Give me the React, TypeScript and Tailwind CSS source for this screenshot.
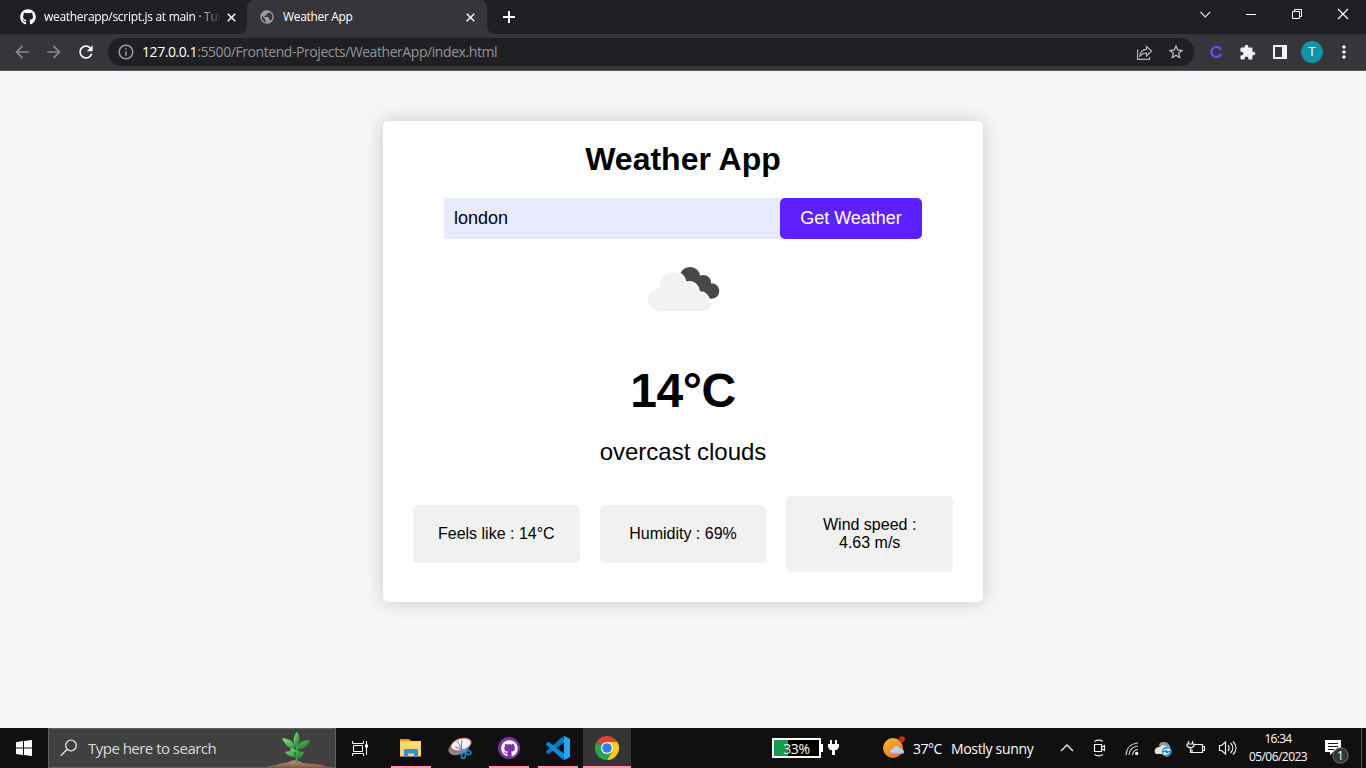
import React from "react";
import { FaGithub } from "react-icons/fa";
import {
  MdArrowBack,
  MdArrowForward,
  MdExtension,
  MdInfoOutline,
  MdMoreVert,
  MdPublic,
  MdRefresh,
  MdStarBorder,
} from "react-icons/md";

function CloseMark() {
  return (
    <svg className="h-[9px] w-[9px] shrink-0" viewBox="0 0 9 9" stroke="#f1f1f3" strokeWidth="1.6">
      <path d="M.7 .7 8.3 8.3M8.3 .7 .7 8.3" />
    </svg>
  );
}

function TabStrip() {
  return (
    <div className="flex h-[34px] items-stretch bg-[#202024] text-[12px] text-white">
      <div className="flex w-[239px] items-center pl-5">
        <FaGithub className="h-4 w-4 shrink-0" />
        <div className="ml-2 w-[176px] whitespace-nowrap tracking-[-0.3px] [mask-image:linear-gradient(to_right,black_152px,transparent_178px)]">
          weatherapp/script.js at main · Tus
        </div>
        <div className="ml-[7px] flex"><CloseMark /></div>
      </div>
      <svg className="h-[34px] w-2 shrink-0" viewBox="0 0 8 34"><path d="M8 26a8 8 0 0 1-8 8h8z" fill="#36353b" /></svg>
      <div className="flex w-[240px] items-center rounded-t-lg bg-[#36353b] pr-3 pl-[12px]">
        <MdPublic className="h-4 w-4 shrink-0 text-[#9aa0a6]" />
        <span className="ml-2 flex-1 tracking-[-0.33px]">Weather App</span>
        <CloseMark />
      </div>
      <svg className="h-[34px] w-2 shrink-0" viewBox="0 0 8 34"><path d="M0 26a8 8 0 0 0 8 8H0z" fill="#36353b" /></svg>
      <div className="flex flex-1 items-center pl-2">
        <svg className="h-3 w-3" viewBox="0 0 12 12" stroke="#fff" strokeWidth="2"><path d="M6 0v12M0 6h12" /></svg>
      </div>
      <svg className="h-[34px] w-[166px]" viewBox="0 0 166 34" fill="none" stroke="#fff">
        <path d="m.5 12 4.8 4.900 4.800-4.900" strokeWidth="1.100" stroke="#e0e0e2" />
        <path d="M46 14.500h10" />
        <path d="M92.500 11.500h7v7h-7zM94.500 11.500v-2h7v7h-2" />
        <path d="m138 9 10 10m0-10-10 10" strokeWidth="1.200" />
      </svg>
    </div>
  );
}

function Toolbar() {
  return (
    <div className="flex h-[37px] items-start border-b border-[#57555b] bg-[#36353b] pt-1">
      <div className="flex h-7 w-[108px] items-center gap-3 pl-3">
        <MdArrowBack className="h-5 w-5 text-[#88888c]" />
        <MdArrowForward className="h-5 w-5 text-[#88888c]" />
        <MdRefresh className="h-5 w-5 text-white" />
      </div>
      <div className="flex h-7 w-[1086px] items-center rounded-full bg-[#202024] pl-[9px] text-[14px]">
        <MdInfoOutline className="h-[18px] w-[18px] text-[#9aa0a6]" />
        <div className="ml-[7px] flex-1 pb-px whitespace-nowrap tracking-[-0.43px] text-[#949498]">
          <span className="text-white">127.0.0.1</span>:5500/Frontend-Projects/WeatherApp/index.html
        </div>
        <svg className="h-[18px] w-[18px]" viewBox="0 0 18 18" fill="none" stroke="#b5b5b8" strokeWidth="1.200">
          <path d="M1.600 6.500v9.900h12V14" />
          <path d="M10.500 3.500v2.800C6.500 6.500 4.300 9 4 13c1.700-2.200 3.600-3 6.500-3v2.800L15.600 8z" />
        </svg>
        <MdStarBorder className="mr-[9px] ml-[13px] h-[18px] w-[18px] text-[#c5c5c8]" />
      </div>
      <div className="flex h-7 flex-1 items-center">
        <svg className="ml-4 h-3 w-3" viewBox="0 0 12 12" fill="none" stroke="#6350fb" strokeWidth="2.200">
          <path d="M10.800 4C9.900-.3 1.700-.3 1.500 5.800c0 6.500 8.200 6.300 9.300 2.200" />
        </svg>
        <MdExtension className="ml-[17px] h-[17px] w-[17px] text-[#f0f1f3]" />
        <svg className="ml-[17px] h-[14px] w-[14px]" viewBox="0 0 14 14"><path fill="#f4f4f6" fillRule="evenodd" d="M0 0h14v14H0zM2 2v10h7V2z" /></svg>
        <div className="ml-[14px] flex h-[22px] w-[22px] items-center justify-center rounded-full bg-[#1095a8] font-['Liberation_Sans',sans-serif] text-[12px] text-white">T</div>
        <MdMoreVert className="ml-[11px] h-5 w-5 text-white" />
      </div>
    </div>
  );
}

function CloudIcon() {
  return (
    <svg className="mx-auto h-[100px] w-[100px]" viewBox="0 0 100 100">
      <g fill="#484749">
        <circle cx="57" cy="38.500" r="10.500" />
        <circle cx="70.500" cy="43.500" r="7.500" />
        <circle cx="78.500" cy="52" r="7.800" />
        <path d="m53 44 10-5 11 8-1 12-7-2z" />
      </g>
      <path
        d="M27 72c-7 0-12-5-12-11.500 0-6 4-11 11.700-11-.2-9 5.300-16 13.300-16 6.500 0 11 4 12.800 10.100 7-2.200 12.700 2.200 13.200 9.900 6.500-1 9 2.500 10 8.500l3 2c0 4-4 8-8 8z"
        fill="#f2f2f2"
      />
      <path d="M47 34.500c3 2 5 5.500 5.800 9 7-2.200 12.700 2.200 13.200 9.900 6-.5 9.500 3 10 9M80 62c0 6-4 11-10 11" fill="none" stroke="#fff" strokeWidth="2" />
    </svg>
  );
}

function WeatherPage() {
  return (
    <main className="h-[657px] bg-[#f7f7f7] pt-[50px] font-['Liberation_Sans',Arial,sans-serif] text-black">
      <section className="mx-auto h-[481px] w-[600px] rounded-[5px] bg-white px-[30px] pt-5 text-center shadow-[0_0_20px_rgba(0,0,0,0.2)]">
        <h1 className="text-[32px] leading-[37px] font-bold">Weather App</h1>
        <form className="mx-[31px] mt-5 flex h-[41px]">
          <div className="flex w-[336px] items-center bg-[#e8ebff] pl-[10px] text-[18px]">london</div>
          <button type="button" className="w-[142px] rounded-[5px] bg-[#5d21ff] text-[18px] text-white">Get Weather</button>
        </form>
        <CloudIcon />
        <div className="mt-6 text-[48px] leading-[55px] font-bold tracking-[-0.4px]">14°C</div>
        <div className="mt-5 text-[24px] leading-[28px]">overcast clouds</div>
        <div className="mt-[30px] grid h-[76px] grid-cols-3 items-center gap-5 text-[16px] leading-[18px]">
          <div className="rounded-[5px] bg-[#f1f1f1] p-5">Feels like : 14°C</div>
          <div className="rounded-[5px] bg-[#f1f1f1] p-5">Humidity : 69%</div>
          <div className="rounded-[5px] bg-[#f1f1f1] p-5">Wind speed :<br />4.63 m/s</div>
        </div>
      </section>
    </main>
  );
}

function Plant() {
  return (
    <svg className="h-[38px] w-[68px]" viewBox="0 0 68 38">
      <defs>
        <linearGradient id="leaf" x1="0" y1="0" x2="1" y2="1"><stop stopColor="#9be08a" /><stop offset=".5" stopColor="#48ae50" /><stop offset="1" stopColor="#1d743b" /></linearGradient>
        <linearGradient id="soil" x1="0" y1="0" x2="0" y2="1"><stop stopColor="#c39475" /><stop offset="1" stopColor="#8c6049" /></linearGradient>
      </defs>
      <path d="M1 38c4-2 8-1 12-3 5-1 8-1 12-3 5-2 9 1 12 2 8 1 14 1 19 2l6 2z" fill="url(#soil)" />
      <path d="M30.500 35c0-9 1-14 0-21" stroke="#45a34a" strokeWidth="1.800" fill="none" />
      <g fill="url(#leaf)">
        <path d="M30 18c-4-5-3-10 1-15.500 3.500 5.500 4 10.500-1 15.500z" />
        <path d="M29 20c-7 0-10-5-13-11 8 1 13 4 13 11zM31 20c0-6 6-9 13-9-2 6-6 9.500-13 9z" />
        <path d="M30 28c-5 0-8-1-11-5 6-2 10 0 11 5zM30 29c1-5 4-7 8-6-1 4-3 7-8 6zM25 19l10 4-2 2-9-3z" />
      </g>
    </svg>
  );
}

function FolderIcon() {
  return (
    <svg className="h-6 w-6" viewBox="0 0 24 24">
      <path d="M1 3h9l2 2H1z" fill="#e39b0b" /><path d="M1 5h21v15.500H1z" fill="#ffd763" />
      <path d="M1 7.500h21v2H1z" fill="#ffe28b" opacity=".6" /><path d="M5 21V14l1-1h12l1 1v7h-4v-3.500H9V21z" fill="#3391dc" />
    </svg>
  );
}

function SnipIcon() {
  return (
    <svg className="h-6 w-6" viewBox="0 0 24 24" fill="none">
      <ellipse cx="11" cy="12" rx="11" ry="6.500" transform="rotate(-20 11 12)" fill="#85878c" />
      <ellipse cx="13" cy="8.500" rx="10.500" ry="6" transform="rotate(-18 13 8.500)" fill="#f3f6f8" stroke="#c94a50" />
      <path d="m9 5 7 11M14 4l-1 10M7 11l7 2" stroke="#76818a" />
      <path d="m11 13 9 2M15 13l2 3" stroke="#4aa9de" strokeWidth="1.500" />
      <ellipse cx="15.500" cy="19.500" rx="2" ry="3" transform="rotate(18 15.500 19.500)" stroke="#1489c8" strokeWidth="1.700" />
      <ellipse cx="20.500" cy="16.500" rx="2.500" ry="2" transform="rotate(25 20.500 16.500)" stroke="#1489c8" strokeWidth="1.700" />
    </svg>
  );
}

function VsCodeIcon() {
  return (
    <svg className="h-6 w-6" viewBox="0 0 24 24">
      <path d="M.4 14.900 17 .3l1.500 5.800L3 17.800c-.5.300-.9.300-1.300 0L.4 16.500c-.5-.5-.5-1.100 0-1.600z" fill="#0079c9" />
      <path d="M.4 9.100 17 23.700l1.500-5.800L3 6.200c-.5-.3-.9-.3-1.300 0L.4 7.500c-.5.500-.5 1.100 0 1.600z" fill="#0c89da" />
      <path d="M17 .3c.3-.3.900-.4 1.400-.2l4.800 2.300c.5.200.8.700.8 1.300v16.600c0 .6-.3 1.100-.8 1.300l-4.800 2.300c-.5.200-1.100.1-1.400-.2.500.3 1-.1 1-.8V1.100c0-.7-.5-1.100-1-.8z" fill="#26a5f2" />
    </svg>
  );
}

function ChromeIcon() {
  return (
    <svg className="h-6 w-6" viewBox="0 0 24 24">
      <path d="M12 12 1.600 6A12 12 0 0 1 22.400 6H12z" fill="#e44134" />
      <path d="M12 6h10.400A12 12 0 0 1 12 24l5.200-9z" fill="#ffc91f" />
      <path d="M1.600 6A12 12 0 0 0 12 24l5.200-9L12 12z" fill="#2ca24c" />
      <circle cx="12" cy="12" r="6" fill="#fff" /><circle cx="12" cy="12" r="4.800" fill="#357ee8" />
    </svg>
  );
}

function AppSlot({ children, running = false, active = false }: { children: React.ReactNode; running?: boolean; active?: boolean }) {
  return (
    <div className={active ? "flex h-10 w-12 flex-col items-center bg-[#343434]" : "flex h-10 w-12 flex-col items-center"}>
      <div className="flex h-[38px] items-center pt-[2px]">{children}</div>
      {running && <div className={active ? "h-[2px] w-12 bg-[#ff98a0]" : "h-[2px] w-10 bg-[#ff98a0]"} />}
    </div>
  );
}

function WeatherBadge() {
  return (
    <svg className="h-6 w-6" viewBox="0 0 24 24">
      <defs><linearGradient id="sun" x1="0" y1="0" x2=".6" y2="1"><stop stopColor="#f1bd32" /><stop offset="1" stopColor="#ef7820" /></linearGradient></defs>
      <circle cx="11" cy="12" r="10" fill="url(#sun)" />
      <path d="M11 18c-4 0-4-5 0-5 1-4 6-4 7-.5 4-.5 6 5.500 1 5.500z" fill="#b4d0fb" />
      <path d="M11 18c-2 0-3-1-3-2 3 1 11 1 14 0 0 1-1 2-3 2z" fill="#8eacec" />
      <circle cx="20" cy="3.300" r="3" fill="#cd2b1e" />
    </svg>
  );
}

function TrayIcons() {
  return (
    <svg className="h-10 w-[184px]" viewBox="0 0 184 40" fill="none" stroke="#f1f1f1" strokeWidth="1.200">
      <path d="m6 23 6-6 6 6" strokeWidth="1.400" />
      <path d="M39.500 16.500h7v7h-7zM47 19l2.500-1.500v5L47 21M39.500 13.500c2.500-1.500 6-1.500 8.500 0M39.500 26.500c2.500 1.500 6 1.500 8.500 0" />
      <path d="M71 27C71.500 20 76 15.500 83 15M74 27c.5-5 4-8.500 9-9M77.500 27c.3-3 2.500-5.300 5.500-5.500" stroke="#cfcfcf" />
      <circle cx="81.700" cy="25.500" r="1.700" fill="#fff" stroke="none" />
      <g stroke="none">
        <path d="M104 18c0-3 2-4.500 5-4 4 0 7 3 6 9h-6z" fill="#969696" />
        <path d="M100 25c-1-4 1-6 5-6 2-3 6-2 7 1v6h-9c-1 0-2 0-3-1z" fill="#e3e3e3" />
        <circle cx="111.500" cy="23.500" r="4.700" fill="#147ed2" stroke="#deeffc" strokeWidth=".6" />
        <path d="M109 23c1-3 4-2 5-.5m0-2v2h-2m2 2c-1 2-4 2-5 .3m0 2v-2h2" stroke="#fff" />
      </g>
      <path d="M139 16.500h8.500v8h-10.500v-3M147.500 18.500h2v4h-2M133.500 13v3m4-3v3m-5.500 0h7v2q-3.500 3.500-7 0zM135.500 19.500v5h2" />
      <path d="M164.500 17.500h2l4-3.500v12l-4-3.500h-2zM173 17c1.500 2 1.500 4 0 6M175.500 15c3 3 3 7 0 10M178 13.500c4 4 4 9 0 13" />
    </svg>
  );
}

function Taskbar() {
  return (
    <footer className="flex h-10 items-stretch bg-[#101010] text-white">
      <div className="flex w-12 items-center justify-center">
        <svg className="h-4 w-4" viewBox="0 0 16 16" fill="#fff"><path d="M0 2.200 7 1.100v6.500H0zM8 1l8-1v7.600H8zM0 8.500h7V15L0 14zM8 8.500h8V16l-8-1z" /></svg>
      </div>
      <div className="flex w-[288px] items-center border border-[#626262] bg-[#404040] pl-[11px]">
        <svg className="h-[18px] w-[18px]" viewBox="0 0 18 18" fill="none" stroke="#e4e4e4" strokeWidth="1.300"><circle cx="11" cy="6.500" r="5.300" /><path d="m7.200 10.300-6.500 6.500" /></svg>
        <span className="ml-[10px] w-[151px] text-[15px] tracking-[-0.52px] whitespace-nowrap text-[#dadada]">Type here to search</span>
        <span className="ml-[27px]"><Plant /></span>
      </div>
      <div className="mr-[3px] flex w-12 items-center justify-center">
        <svg className="h-[18px] w-[18px]" viewBox="0 0 18 18" fill="none" stroke="#fff"><path d="M2.500 6.500h9v6h-9zM1.500 2v2.500h11V2M1.500 17v-2.500h11V17M15.500 2v14" /><path d="M14 5.500h3v3h-3z" fill="#fff" stroke="none" /></svg>
      </div>
      <div className="flex gap-px">
        <AppSlot running><FolderIcon /></AppSlot>
        <AppSlot><SnipIcon /></AppSlot>
        <AppSlot running>
          <div className="flex h-[22px] w-[22px] items-center justify-center rounded-full bg-[#7c32a1]"><FaGithub className="h-[17px] w-[17px]" /></div>
        </AppSlot>
        <AppSlot running><VsCodeIcon /></AppSlot>
        <AppSlot running active><ChromeIcon /></AppSlot>
      </div>
      <div className="ml-[141px] flex w-[110px] items-center">
        <div className="flex h-5 w-[49px] items-center justify-center border-2 border-white bg-[linear-gradient(to_right,#159b4b_14px,#000_14px)] text-[14px] tracking-[-0.3px]">33%</div>
        <div className="h-2 w-[2px] bg-white" />
        <svg className="ml-[5px] h-4 w-[11px]" viewBox="0 0 11 16" fill="#fff"><path d="M2 0h2v4h3V0h2v4h2v3L9 10H7v5H4v-5H2L0 7V4h2z" /></svg>
      </div>
      <div className="flex w-[173px] items-center text-[14px] whitespace-nowrap">
        <WeatherBadge />
        <span className="ml-[7px] w-[38px] tracking-[-0.5px]">37°C</span>
        <span className="tracking-[-0.33px]">Mostly sunny</span>
      </div>
      <TrayIcons />
      <div className="flex w-[78px] flex-col items-center pt-[2px] text-[12px] leading-[18px]">
        <span className="tracking-[-0.7px]">16:34</span>
        <span className="tracking-[-0.55px]">05/06/2023</span>
      </div>
      <svg className="ml-[7px] h-10 w-[27px]" viewBox="0 0 27 40">
        <path d="M1 12h16v12H9l-3 3v-3H1z" fill="#fff" /><path d="M4 15.500h10M4 18.500h10M4 21.500h6" stroke="#111" />
        <circle cx="16.500" cy="27.500" r="7.700" fill="#363636" stroke="#777" />
        <text x="16.500" y="32" textAnchor="middle" fill="#fff" fontSize="12">1</text>
      </svg>
      <div className="ml-[10px] w-px bg-[#565656]" />
    </footer>
  );
}

export default function App() {
  return (
    <div className="flex h-[768px] w-[1366px] flex-col overflow-hidden font-['Open_Sans','Noto_Sans',sans-serif]">
      <TabStrip />
      <Toolbar />
      <WeatherPage />
      <Taskbar />
    </div>
  );
}
